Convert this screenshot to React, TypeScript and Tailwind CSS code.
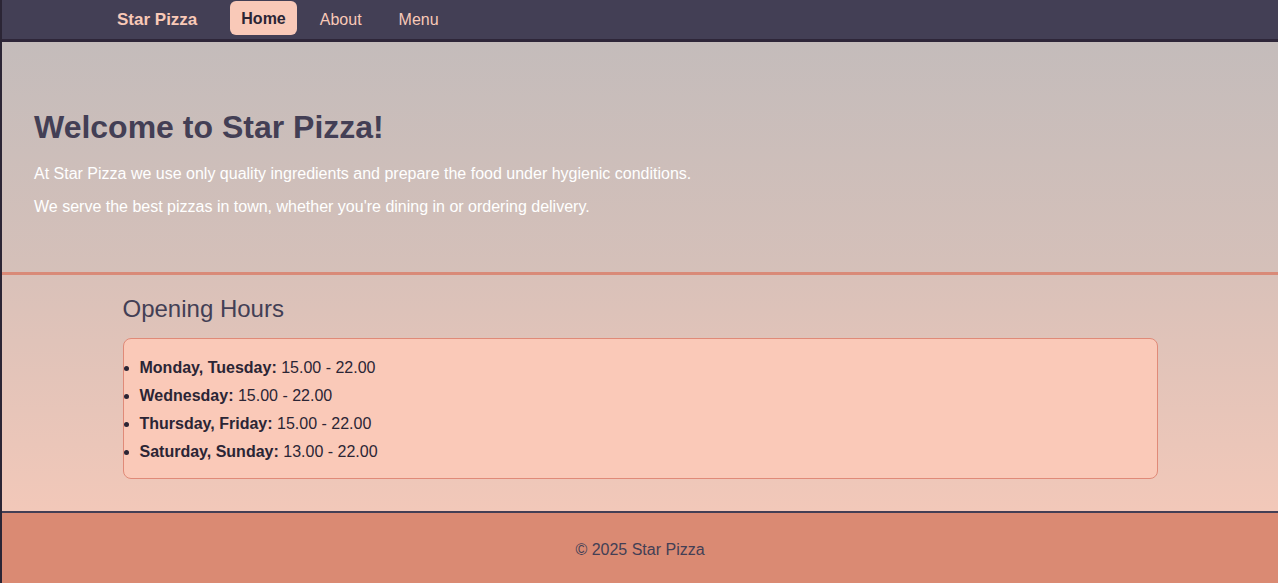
const hours = [
  { days: 'Monday, Tuesday:', time: '15.00 - 22.00' },
  { days: 'Wednesday:', time: '15.00 - 22.00' },
  { days: 'Thursday, Friday:', time: '15.00 - 22.00' },
  { days: 'Saturday, Sunday:', time: '13.00 - 22.00' },
];

export default function App() {
  return (
    <div className="min-h-[583px] border-l-2 border-[#2b2535] font-['Liberation_Sans',sans-serif]">
      <nav className="flex h-[42px] items-start border-b-[3px] border-[#2e2639] bg-[#433f55]">
        <div className="ml-[115px] flex items-start">
          <span className="mt-[8px] text-[17px] font-bold leading-[24px] text-[#f9c9b7]">Star Pizza</span>
          <a className="ml-[33px] mt-px rounded-md bg-[#f9c9b8] px-[11px] pb-[4px] pt-[6px] text-base font-bold leading-[24px] text-[#2b2535]">
            Home
          </a>
          <a className="ml-[23px] mt-[8px] text-base leading-[24px] text-[#f9c9b7]">About</a>
          <a className="ml-[37px] mt-[8px] text-base leading-[24px] text-[#f9c9b7]">Menu</a>
        </div>
      </nav>

      <header className="h-[233px] border-b-[3px] border-[#d98a78] bg-[linear-gradient(180deg,#c4bcbb_0%,#d5c0b9_100%)] px-8 pt-[63px]">
        <h1 className="text-[32px] font-bold leading-[44px] text-[#433f55]">Welcome to Star Pizza!</h1>
        <p className="mt-[13px] text-base leading-[24px] text-white">
          At Star Pizza we use only quality ingredients and prepare the food under hygienic conditions.
        </p>
        <p className="mt-[9px] text-base leading-[24px] text-white">
          We serve the best pizzas in town, whether you're dining in or ordering delivery.
        </p>
      </header>

      <main className="h-[236px] bg-[linear-gradient(180deg,#d9c1b9_0%,#f2c8b9_100%)] pt-[18px]">
        <div className="mx-auto w-[1035px]">
          <h2 className="text-[24px] leading-[32px] text-[#433f55]">Opening Hours</h2>
          <ul className="mt-[13px] list-disc rounded-lg border border-[#e08a78] bg-[#fac9b8] pb-[12px] pl-[16px] pt-[15px] text-base text-[#2b2535]">
            {hours.map((h) => (
              <li key={h.days} className="leading-[28px]">
                <span className="font-bold">{h.days}</span> {h.time}
              </li>
            ))}
          </ul>
        </div>
      </main>

      <footer className="flex h-[72px] items-center justify-center border-t-2 border-[#433f55] bg-[#da8a73] pt-[4px] text-base text-[#433f55]">
        © 2025 Star Pizza
      </footer>
    </div>
  );
}
